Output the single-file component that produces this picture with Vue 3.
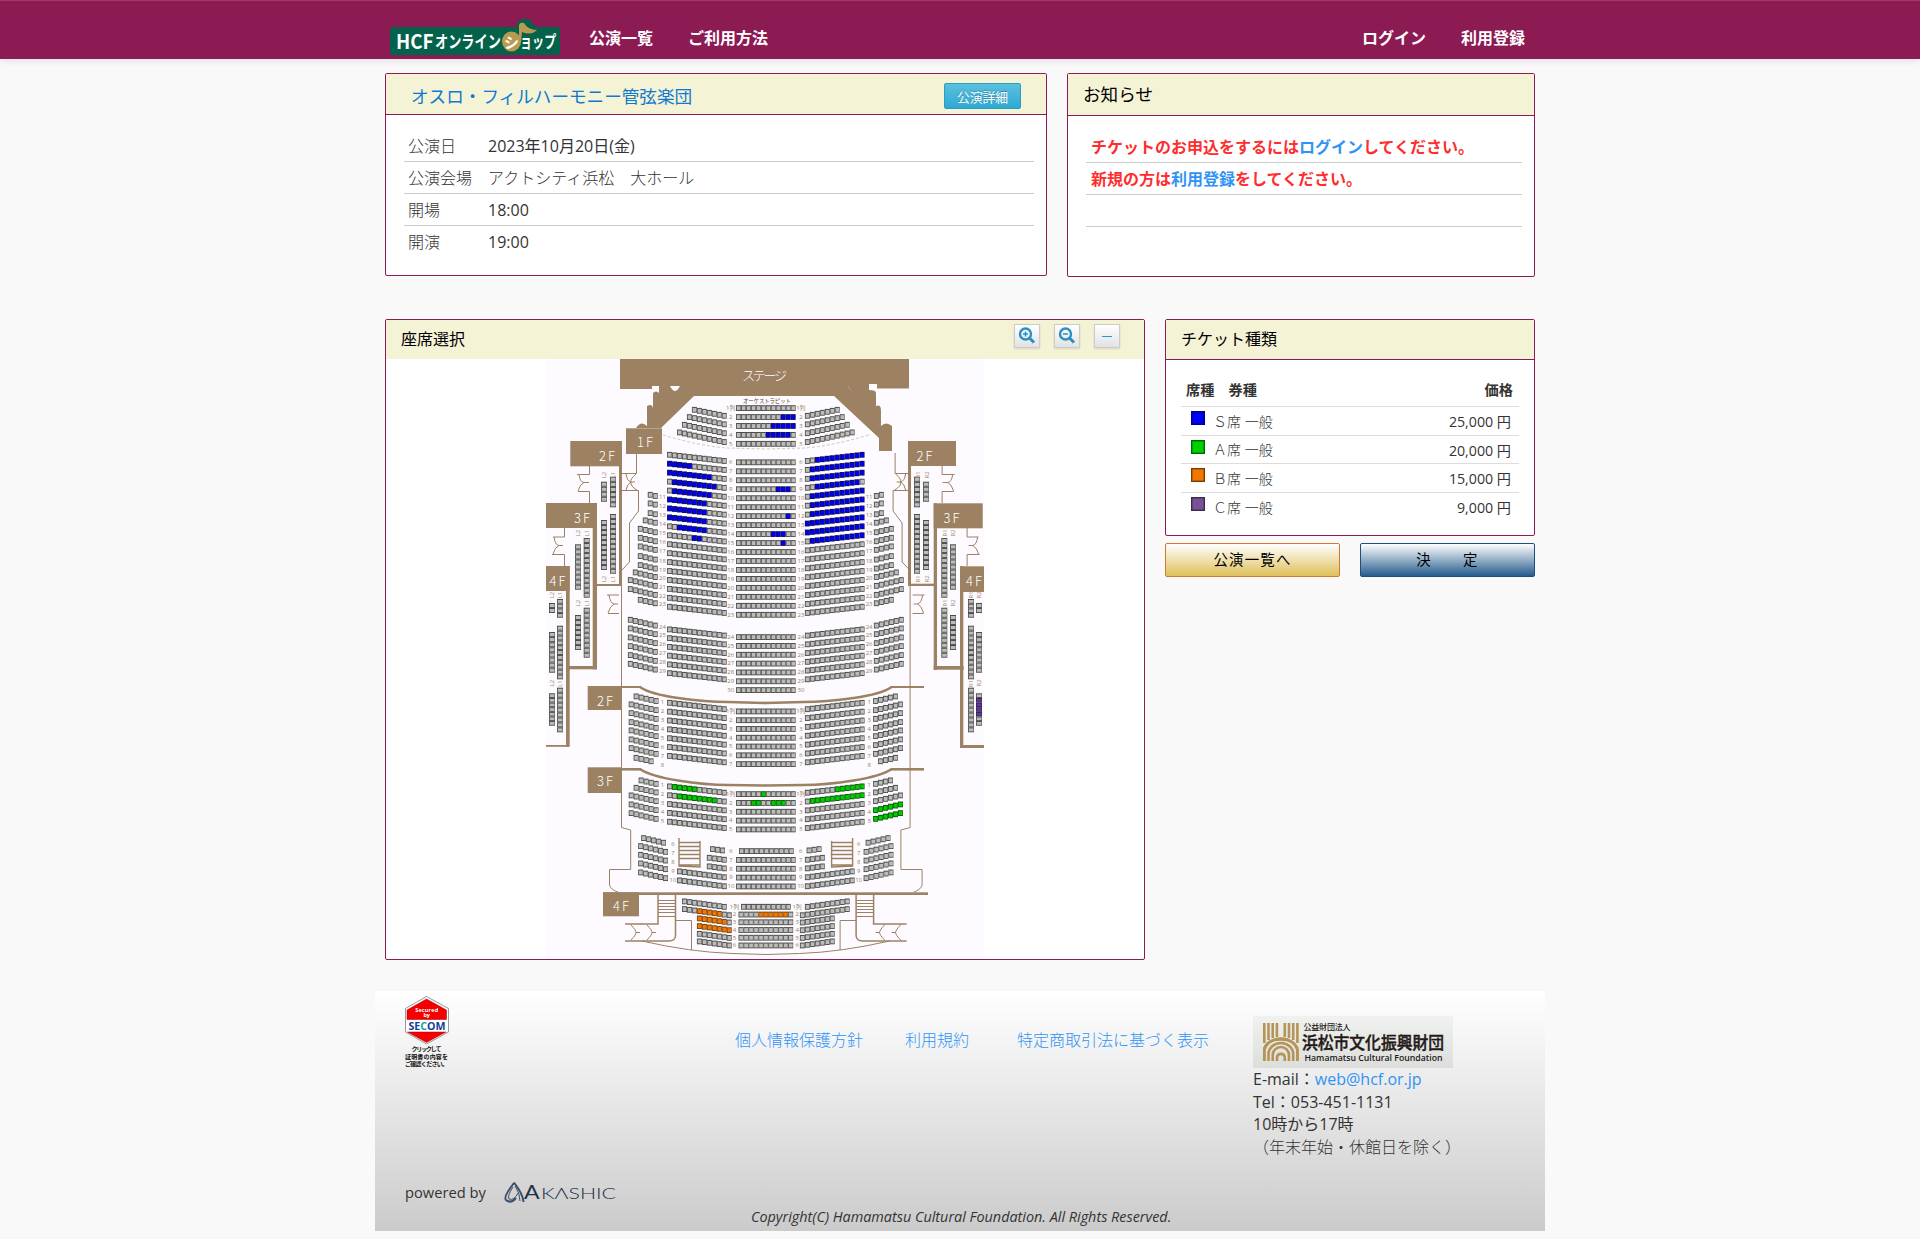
<template>
  <div class="page">
    <header class="navbar">
      <div class="navbar-inner">
        <a class="brand">
          <svg width="170" height="37" viewBox="390 18 170 37">
            <rect x="390" y="27" width="170" height="28" rx="3" fill="#04624b" />
            <path d="M517 30 L517 23 Q519 19 524 19 L528 19 Q532 22 535 26 L540 28 L537 34 L517 34 Z" fill="#04624b" />
            <ellipse cx="511.500" cy="41.500" rx="9.500" ry="10" fill="#b99a51" />
            <path d="M519 42 V26 Q519 22 524 23 Q528 30 537 30 Q531 36 522 32 L521 42 Z" fill="#b99a51" />
            <g class="brand-text">
              <text transform="translate(396 48.500) scale(.94 1)" font-size="20">HCF</text>
              <text transform="translate(435 47.500) scale(.775 1)" font-size="17">オンライン</text>
              <text transform="translate(504 47.500)" font-size="15">シ</text>
              <text transform="translate(520 47.500) scale(.71 1)" font-size="17">ョップ</text>
            </g>
          </svg>
        </a>
        <nav class="nav">
          <a>公演一覧</a>
          <a>ご利用方法</a>
        </nav>
        <nav class="nav nav-right">
          <a>ログイン</a>
          <a>利用登録</a>
        </nav>
      </div>
    </header>

    <main class="container">
      <div class="row">
        <section class="card event">
          <div class="card-head event-head">
            <h2>オスロ・フィルハーモニー管弦楽団</h2>
            <button class="btn-info">公演詳細</button>
          </div>
          <dl class="event-list">
            <div v-for="item in eventInfo" :key="item.label" class="event-item">
              <dt>{{ item.label }}</dt>
              <dd>{{ item.value }}</dd>
            </div>
          </dl>
        </section>

        <section class="card news">
          <div class="card-head news-head">お知らせ</div>
          <ul class="news-list">
            <li>チケットのお申込をするには<a>ログイン</a>してください。</li>
            <li>新規の方は<a>利用登録</a>をしてください。</li>
            <li></li>
            <li></li>
          </ul>
        </section>
      </div>

      <div class="row row-seat">
        <section class="card seat">
          <div class="card-head seat-head">
            <span>座席選択</span>
            <div class="tools">
              <button v-for="tool in ['plus', 'minus']" :key="tool" class="tool">
                <svg width="18" height="18" viewBox="0 0 18 18" fill="none" stroke="#2a8fc4">
                  <circle cx="7.500" cy="7" r="5.500" stroke-width="2.400" />
                  <path d="M11.500 11 L16 15.500" stroke-width="3" />
                  <path d="M5 7 H10" stroke-width="1.500" />
                  <path v-if="tool === 'plus'" d="M7.500 4.500 V9.500" stroke-width="1.500" />
                </svg>
              </button>
              <button class="tool"><span class="bar"></span></button>
            </div>
          </div>
          <div class="map">
            <svg width="438" height="600" viewBox="546 359 438 600">
              <rect x="546" y="359" width="438" height="600" fill="#fdfbff" />

              <!-- ステージ -->
              <g fill="#9c8162">
                <path d="M620 359 H909 V388.500 H877 V384 H869 V387 H859 L857 391 Q852 395 848 386 H834 L834 396 H693 V386 H620 Z" />
                <path d="M620 359 H909 V388 H877 V384 H869 V386 H661 V384 H652 V389 H620 Z" />
                <path d="M659 386 H670 Q675 396 680 386 H848 Q852 396 859 387 H869 V390 Q876 390 876 393 V406 Q881 404 881 411 V426 Q886 421 892 426 V451 H879 V438 L834 396 H694 L661 428 H636 Q641 420 647 426 V406 Q652 403 653 408 V393 Q656 390 659 393 Z" />
              </g>

              <!-- 階の表示と壁 -->
              <g fill="#9c8162">
                <rect v-for="(w, i) in walls" :key="i" :x="w[0]" :y="w[1]" :width="w[2]" :height="w[3]" />
              </g>
              <g v-for="side in sides" :key="side" :transform="side" fill="none" stroke="#9c8162">
                <path d="M621.500 586 V827.500 L630.700 830 V869.500 H609.500 V885 Q611 890 618 892" stroke-width="1" />
                <path d="M636.500 453 V473.500 H622 M622 490.500 H638.500 V511 L629.500 523 V562 L622 570" stroke-width="1" />
                <path d="M640 687 Q650 694 678 698 T728 702 L766 703" stroke-width="2.600" />
                <path d="M640 769 Q650 776 678 780.500 T728 785 L766 785.500" stroke-width="2.600" />
                <path d="M663 435 Q700 446 727 448 L766 449" stroke="#d3c7ba" stroke-width="1" stroke-dasharray="3 2" />
                <path d="M679 838 V866 L700 867 V841 M679 842.500 H700 M679 846.500 H700 M679 850.500 H700 M679 854.500 H700 M679 858.500 H700 M679 865 H700" stroke-width="1.400" />
                <path d="M658 895 V924 H625 M675.500 895 V936 Q675 941 669 941 H625" stroke-width="1.500" />
                <path d="M658 900.500 H675 M658 903.500 H675 M658 906.500 H675 M658 909.500 H675 M658 912.500 H675 M658 916.500 H675" stroke-width="1" />
                <path d="M675.500 920.500 H691.500 V950" stroke-width="1" />
                <path d="M642 941 Q690 952 732 953.500 L766 954.500" stroke-width="1" />
                <path d="M631 925 Q636 930 636 932.500 H640 M636 932.500 Q636 935 631 940 M647 925 Q652 930 652 932.500 H656 M652 932.500 Q652 935 647 940" stroke-width="1" />
                <path v-for="(d, i) in doors" :key="i" :d="d" stroke-width="1" />
              </g>

              <!-- 座席 -->
              <g v-for="(s, i) in seats" :key="i">
                <rect :x="s.x" :y="s.y" :width="s.w" :height="s.h" :fill="s.edge" />
                <rect :x="s.x + 0.8" :y="s.y + 1" :width="s.w - 1.3" :height="s.h - 1.9" :fill="s.color" />
              </g>

              <g class="row-no">
                <text v-for="(n, i) in numbers" :key="i" :x="n.x" :y="n.y">{{ n.t }}</text>
              </g>
              <g class="row-no">
                <text v-for="(n, i) in columnNames" :key="i" :transform="`translate(${n[0]} ${n[1]}) rotate(-90)`">{{ n[2] }}</text>
              </g>
              <g class="floor">
                <text v-for="(f, i) in floors" :key="i" :x="f[1]" :y="f[2]">{{ f[0] }}</text>
                <text x="765.500" y="379.500" textLength="47">ステージ</text>
              </g>
              <text x="743" y="403" textLength="48" class="pit">オーケストラピット</text>
            </svg>
          </div>
        </section>

        <aside class="side">
          <section class="card ticket">
            <div class="card-head ticket-head">チケット種類</div>
            <div class="ticket-table">
              <div class="ticket-row ticket-title">
                <span>席種　券種</span>
                <span>価格</span>
              </div>
              <div v-for="t in tickets" :key="t.name" class="ticket-row">
                <i class="swatch" :style="{ background: t.color }"></i>
                <span class="ticket-name">{{ t.name }}席 一般</span>
                <span class="price">{{ t.price }} 円</span>
              </div>
            </div>
          </section>
          <div class="actions">
            <button class="btn btn-back">公演一覧へ</button>
            <button class="btn btn-ok">決　　定</button>
          </div>
        </aside>
      </div>

      <footer class="footer">
        <svg class="secom" width="46" height="74" viewBox="404 995 46 74">
          <path d="M426.500 996.500 L448.500 1008.500 V1032 L426.500 1044 L405.500 1032 V1008.500 Z" fill="#fff" stroke="#999" stroke-width="1" />
          <path d="M426.500 999 L446.500 1010 V1019.500 H407 V1010 Z M407.500 1032 H446 L426.500 1042.500 Z" fill="#f40000" stroke="#a00" stroke-width=".5" />
          <g text-anchor="middle" font-weight="700">
            <text x="426.700" y="1011.500" font-size="5.500" fill="#fff" textLength="23">Secured</text>
            <text x="426.700" y="1016.500" font-size="5.500" fill="#fff">by</text>
            <text x="427" y="1030" font-size="11" fill="#143c96" textLength="37" lengthAdjust="spacingAndGlyphs">SE<tspan fill="#13a294">C</tspan>OM</text>
            <g fill="#111" font-size="6">
              <text x="426.500" y="1051" textLength="30">クリックして</text>
              <text x="426.500" y="1058.500" textLength="43">証明書の内容を</text>
              <text x="426.500" y="1066" textLength="43">ご確認ください。</text>
            </g>
          </g>
        </svg>
        <div class="powered">
          <span>powered by</span>
          <svg width="112" height="22" viewBox="504 1181 112 22">
            <g fill="none" stroke="#3b5068">
              <path d="M514 1183 Q503 1197 506 1200 Q511 1204 516 1198" stroke-width="2" />
              <path d="M514 1182.500 Q523 1194 523.500 1202" stroke-width="2" />
              <path d="M513 1187 Q507 1196 509 1199 Q514 1201 518 1193 M515 1186 Q520 1193 520 1201" stroke-width="1" />
            </g>
            <g fill="#1c304a" font-family="Lato, sans-serif">
              <text transform="translate(524 1199) scale(1.15 1)" font-size="20">A</text>
              <text x="541" y="1199" font-size="16" font-weight="300" textLength="75" lengthAdjust="spacingAndGlyphs">KΛSHIC</text>
            </g>
          </svg>
        </div>
        <nav class="links">
          <a>個人情報保護方針</a>
          <a>利用規約</a>
          <a>特定商取引法に基づく表示</a>
        </nav>
        <p class="copyright">Copyright(C) Hamamatsu Cultural Foundation. All Rights Reserved.</p>
        <address class="contact">
          <svg width="200" height="52" viewBox="0 0 200 52">
            <defs>
              <linearGradient id="plate" x2="0" y2="1">
                <stop offset="0" stop-color="#f0f2f0" />
                <stop offset="1" stop-color="#dcdedc" />
              </linearGradient>
            </defs>
            <rect width="200" height="52" fill="url(#plate)" />
            <g fill="none" stroke="#b69456" stroke-width="2.600">
              <path d="M11.300 7 V27 M15.500 7 V24 M19.700 7 V22 M23.900 7 V21 M31.800 7 V21 M36 7 V22 M40.200 7 V24 M44.400 7 V27" />
              <path d="M11.300 45 V36 A16.500 13.500 0 0 1 44.400 36 V45 M15.500 45 V38 A12.300 11 0 0 1 40.200 38 V45 M19.700 45 V39 A8.100 8 0 0 1 36 39 V45 M24 45 V41 A4 4 0 0 1 31.800 41 V45" />
              <path d="M11.300 45 V32 Q15 23.500 27.800 23.500 T44.400 32 V45" />
            </g>
            <g fill="#231815" font-weight="500">
              <text x="50.500" y="14" font-size="8" textLength="47">公益財団法人</text>
              <text x="49" y="32.500" font-size="16.500" textLength="142" lengthAdjust="spacingAndGlyphs" stroke="#231815" stroke-width=".4">浜松市文化振興財団</text>
              <text x="51.500" y="44.500" font-size="8.500" font-weight="600" textLength="138" lengthAdjust="spacingAndGlyphs">Hamamatsu Cultural Foundation</text>
            </g>
          </svg>
          <div>E-mail：<a>web@hcf.or.jp</a></div>
          <div>Tel：053-451-1131</div>
          <div>10時から17時</div>
          <div>（年末年始・休館日を除く）</div>
        </address>
      </footer>
    </main>
  </div>
</template>

<script setup>
const eventInfo = [
  { label: '公演日', value: '2023年10月20日(金)' },
  { label: '公演会場', value: 'アクトシティ浜松　大ホール' },
  { label: '開場', value: '18:00' },
  { label: '開演', value: '19:00' }
]

const tickets = [
  { name: 'Ｓ', color: '#0000ff', price: '25,000' },
  { name: 'Ａ', color: '#00d000', price: '20,000' },
  { name: 'Ｂ', color: '#f07800', price: '15,000' },
  { name: 'Ｃ', color: '#785096', price: '9,000' }
]

const BLUE = '#0000f8'
const GREEN = '#00cc00'
const ORANGE = '#f07800'
const PURPLE = '#5c3c98'

const edges = {
  [BLUE]: '#10105c',
  [GREEN]: '#0a5a0a',
  [ORANGE]: '#7a4410',
  [PURPLE]: '#33244c'
}

const AXIS = 1531.6
const PITCH = 4.97
const seats = []
const numbers = []

const addSeat = (x, y, w, h, color) => {
  seats.push({
    x, y, w, h,
    color: color || '#bcbcb8',
    edge: edges[color] || '#4c4c4c'
  })
}

// 横一列。on は販売中の席 [開始, 終了, 色]
const addRow = (x, y, count, drop, on = []) => {
  for (let i = 0; i < count; i++) {
    const hit = on.find(o => i >= o[0] && i <= o[1])
    addSeat(x + i * PITCH, y + i * drop - 2.8, PITCH, 5.8, hit && hit[2])
  }
}

// 左右対称の列。end は左側ブロックの右端
const addPair = (end, y, count, drop, left, right) => {
  addRow(end - count * PITCH, y, count, drop, left)
  addRow(AXIS - end, y + (count - 1) * drop, count, -drop, right)
}

const addNumber = (t, x, y) => {
  numbers.push({ t, x, y: y + 2 })
  numbers.push({ t, x: AXIS - x, y: y + 2 })
}

// 1F 中央
const centerOn = {
  2: [9, 11], 3: [7, 11], 4: [6, 10], 9: [8, 10], 12: [10, 10], 14: [7, 9], 15: [9, 9]
}
for (let n = 1; n <= 30; n++) {
  let y = 408 + (n - 1) * 8.93
  if (n > 5) y = 462.2 + (n - 6) * 8.97
  if (n > 23) y = 637 + (n - 24) * 8.83
  const on = centerOn[n] ? [[...centerOn[n], BLUE]] : []
  addRow(736, y, 12, 0, on)
  addNumber(n === 1 ? '1列' : n, 730.7, y)
}

// 1F 前方
addPair(726.7, 409.7, 7, 1, [], [])
addPair(726.7, 417, 8, 1.03, [], [])
addPair(726.7, 424.7, 9, 1.05, [], [])
addPair(726.7, 432.3, 10, 1.07, [], [])

// 1F 左右
const leftOn = {
  7: [0, 4], 8: [0, 8], 9: [1, 9], 10: [1, 8], 11: [0, 7], 12: [0, 7], 13: [0, 7], 14: [2, 7], 15: [5, 6]
}
const rightOn = {
  6: [2, 11], 7: [1, 11], 8: [1, 11], 9: [2, 10], 10: [1, 11], 11: [1, 11], 12: [1, 11], 13: [0, 11], 14: [0, 11], 15: [1, 11]
}
for (let n = 6; n <= 29; n++) {
  const y = n < 24 ? 454.7 + (n - 6) * 8.94 : 629.3 + (n - 24) * 8.75
  const l = leftOn[n] ? [[...leftOn[n], BLUE]] : []
  const r = rightOn[n] ? [[...rightOn[n], BLUE]] : []
  addPair(726.7, y, 12, 0.56, l, r)
}

// 1F 両端 [y, 席数]
const outer = [
  [494.7, 2], [503.3, 2], [513, 2], [520.3, 3], [528.7, 4], [537.7, 4], [546.3, 4], [556, 4], [565, 4],
  [572.3, 5], [580, 6], [589, 6], [599.7, 4], [619.7, 6], [628.3, 6], [637.3, 6], [646, 6], [655, 6], [663.7, 6]
]
outer.forEach(([y, count], i) => {
  addPair(657.7, y, count, 1.15, [], [])
  addNumber(i + 11, 662.5, y + count * 1.15)
})

// 2F
for (let i = 0; i < 7; i++) {
  addRow(736, 711.3 + i * 8.78, 12, 0)
  addPair(726.7, 702.7 + i * 8.85, 12, 0.58, [], [])
  addNumber(i ? i + 1 : '1列', 730.7, 711 + i * 8.85)
}
const outer2 = [[696.3, 5], [704.3, 6], [713, 6], [722, 6], [730.3, 6], [739.3, 6], [748, 6]]
outer2.forEach(([y, count], i) => {
  addPair(658.5, y, count, 1.15, [], [])
  addNumber(i + 1, 662.5, 701.5 + i * 9)
})
addPair(653.5, 757.7, 4, 1.15, [], [])
addNumber(8, 662.5, 764.5)

// 3F 前方
const green = {
  center: [[[5, 5, GREEN]], [[3, 4, GREEN], [7, 9, GREEN]]],
  left: [[[1, 5, GREEN]], [[2, 9, GREEN]]],
  right: [[[6, 11, GREEN]], [[1, 11, GREEN]]]
}
const outer3 = [[780.3, 4], [787.7, 5], [795.3, 6], [804.3, 6], [813, 6]]
outer3.forEach(([y, count], i) => {
  addRow(736, 794 + i * 8.83, 12, 0, green.center[i])
  addPair(726.7, 786.3 + i * 8.83, 12, 0.57, green.left[i], green.right[i])
  addPair(658.5, y, count, 1.15, [], i > 2 ? [[0, 5, GREEN]] : [])
  addNumber(i ? i + 1 : '1列', 730.7, 794 + i * 8.83)
  addNumber(i + 1, 662.5, 785 + i * 9)
})

// 3F 後方 [左 y, 席数]
const back = [[849, 3], [857.7, 4], [866.3, 4], [871.3, 10], [880.3, 10]]
back.forEach(([y, count], i) => {
  addRow(i ? 736 : 739, 851 + i * 8.83, i ? 12 : 11, 0)
  addPair(i ? 726.7 : 725, y, count, 0.65, [], [])
  addPair(i ? 668 : 666, [838, 846, 854.7, 863.3, 872.3][i], i ? 6 : 5, 1.15, [], [])
  addNumber(i + 6, 731, 851 + i * 8.83)
  addNumber(i + 6, 673, 844 + i * 9)
})

// 4F
const top = [[726.7, 901.3, 9], [731.7, 909, 10], [731.7, 918.3, 7], [731.7, 926, 7], [731.7, 933.7, 7], [731.7, 941.3, 7]]
const orange = [[], [[3, 7, ORANGE]], [[0, 5, ORANGE]], [[0, 6, ORANGE]], [], []]
top.forEach(([end, y, count], i) => {
  addRow(i ? 738.5 : 741, 906.7 + i * 7.73, i ? 11 : 10, 0, i === 1 ? [[4, 9, ORANGE]] : [])
  addPair(end, y, count, 0.68, orange[i], [])
  addNumber(i ? i + 1 : '1列', 734.5, 906.7 + i * 7.73)
})

// バルコニー席 [x, 上端, 下端, 席数]
const balconies = [
  [604, 481.7, 501.7, 4], [613, 476.7, 507.3, 6], [604, 520, 570, 10], [613, 514, 573.7, 12],
  [578, 544.3, 589.7, 9], [586.7, 538, 597.7, 12], [578, 615, 650, 7], [586.7, 607.7, 657.7, 10],
  [552, 603, 613, 2], [560, 599, 617.7, 4], [552, 632, 672.7, 8], [560, 625.7, 679.3, 11],
  [552, 693.3, 725.7, 7], [560, 687.7, 732.3, 9]
]
balconies.forEach(([x, y1, y2, count], k) => {
  const h = (y2 - y1) / count
  for (let i = 0; i < count; i++) {
    addSeat(x - 3, y1 + i * h, 6, h)
    const right = k < 4 ? 1530 - x : 1531 - x
    addSeat(right - 3, y1 + i * h, 6, h, k === 12 && i > 0 && i < 5 ? PURPLE : null)
  }
})

const columnNames = []
const nameSpots = [
  [606, 475, 2], [615, 475, 1], [606, 579, 2], [615, 579, 1], [580, 533, 2], [588.5, 533, 1],
  [580, 603, 2], [588.5, 603, 1], [554, 595, 2], [562, 595, 1], [554, 683, 2], [562, 683.5, 1]
]
nameSpots.forEach(([x, y, n]) => {
  columnNames.push([x, y, 'L' + n])
  columnNames.push([1535 - x, y, 'R' + n])
})

const walls = [
  [626, 428.3, 36, 25.7],
  [570.3, 441, 51.7, 25.3], [619, 441, 3, 145], [597, 584, 25, 2],
  [546, 503, 51, 25], [592.7, 503, 4.3, 166.3], [569, 666, 28, 3.3],
  [546, 566, 23.7, 25], [566, 566, 3.7, 180.7], [546, 745, 23, 1.8],
  [908, 441, 48, 25], [908, 441, 3, 145], [908, 583.7, 29, 2.3],
  [933.7, 503.3, 49, 25], [933.7, 503.3, 3.3, 166.7], [933.7, 666, 30, 3.7],
  [960, 566.3, 24, 25.7], [960, 566.3, 3.3, 181.7], [960, 745, 24, 3],
  [587.7, 686, 34, 24], [587.7, 767.3, 34, 25.7], [603, 892.3, 36, 24],
  [603, 892.3, 325, 2.7],
  [620, 686, 21, 2], [891, 686, 33, 2], [620, 768, 21, 2.6], [891, 768, 33, 2.6]
]

const sides = ['', `translate(${AXIS}) scale(-1 1)`]

const doors = [
  'M589.500 466 V474.500 H577 M579 475 Q580 482 584 482.500 H589 M584 482.500 Q580 484 578 491 M578 491.500 H589.500 V503',
  'M564.500 528 V537 H553 M554 537 Q555 545 559 545.500 H563 M559 545.500 Q555 547 553 554 M552 554.500 H564.500 V566',
  'M626 474 Q627 481 631 482 H635 M631 482 Q627 484 626 490 M636 474 Q630 479 631 482 Q630 486 637 490',
  'M607 595 H619 M609 595 Q610 603 614 604 H618 M614 604 Q610 606 608 613 M608 613.500 H619'
]

const floors = [
  ['1F', 646, 446.500], ['2F', 608, 461], ['3F', 583, 522.500], ['4F', 558.500, 586],
  ['2F', 925.500, 461], ['3F', 952.500, 522.500], ['4F', 975, 586],
  ['2F', 606, 705.500], ['3F', 606, 786], ['4F', 622, 911]
]
</script>

<style>
body {
  margin: 0;
  background: #f9f9f9;
}
</style>

<style scoped>
.page {
  font-family: "Open Sans", "Noto Sans CJK JP", sans-serif;
  font-size: 16px;
  color: #333;
  min-height: 1239px;
  overflow: hidden;
}

.page * {
  box-sizing: border-box;
}

a {
  color: #2f93f5;
}

button {
  font-family: inherit;
  padding: 0;
}

.navbar {
  height: 59px;
  background: #8c1a53;
  border-top: 1px solid #9f3a6b;
  box-shadow: 0 1px 8px rgba(0, 0, 0, 0.12);
}

.navbar-inner {
  width: 1140px;
  margin: 0 auto;
  padding: 17px 5px 0 0;
  display: flex;
}

.brand {
  height: 37px;
  margin: 0 29px 0 0;
}

.brand svg,
.powered svg,
.secom {
  display: block;
  overflow: visible;
}

.brand-text {
  fill: #fff;
  font-weight: 700;
  font-family: "Noto Sans CJK JP", sans-serif;
}

.nav {
  display: flex;
  gap: 35px;
  line-height: 40px;
}

.nav a {
  color: #fff;
  font-weight: 600;
}

.nav-right {
  margin-left: auto;
}

.container {
  width: 1170px;
  margin: 0 auto;
}

.row {
  display: flex;
  align-items: flex-start;
  gap: 20px;
  padding: 14px 10px 0;
}

.row-seat {
  padding-top: 42px;
}

.card {
  background: #fff;
  border: 1px solid #8c1a53;
  border-radius: 2px;
}

.card-head {
  background: #f5f3d5;
  color: #000;
  display: flex;
  align-items: center;
}

.event {
  width: 662px;
  height: 203px;
}

.event-head {
  height: 41px;
  padding: 4px 25px 0 25px;
  border-bottom: 1px solid #8c1a53;
  justify-content: space-between;
}

.event-head h2 {
  margin: 0 0 1px;
  font-size: 17.6px;
  font-weight: 400;
  color: #0d7ad0;
}

.btn-info {
  width: 77px;
  height: 26px;
  border: 1px solid #2a9dc4;
  border-radius: 2px;
  background: linear-gradient(#5bc0de, #2fa9d3);
  color: #fff;
  font-size: 12.8px;
  text-shadow: 0 -1px 0 rgba(0, 0, 0, 0.25);
}

.event-list {
  margin: 15px 12px 0 18px;
}

.event-item {
  height: 32px;
  line-height: 32px;
  padding-left: 4px;
  display: flex;
  border-bottom: 1px solid #ccc;
}

.event-item:last-child {
  border-bottom: none;
}

.event-item dt {
  width: 80px;
  font-weight: 300;
}

.event-item dd {
  margin: 0;
}

.event-item:nth-child(2) dd {
  font-weight: 300;
}

.news {
  width: 468px;
  height: 204px;
}

.news-head {
  height: 42px;
  padding: 0 0 2px 15px;
  font-size: 17.6px;
  border-bottom: 1px solid #8c1a53;
}

.news-list {
  list-style: none;
  margin: 15px 12px 0 18px;
  padding: 0;
  color: #ff2d2d;
  font-weight: 600;
}

.news-list li {
  height: 32px;
  line-height: 32px;
  padding-left: 5px;
  border-bottom: 1px solid #ccc;
}

.news-list li:last-child {
  border-bottom: none;
}

.seat {
  width: 760px;
  height: 641px;
  overflow: hidden;
}

.seat-head {
  height: 39px;
  padding: 0 24px 0 15px;
  justify-content: space-between;
}

.seat-head > span {
  margin-bottom: 3px;
}

.tools {
  display: flex;
  gap: 14px;
  padding-bottom: 7px;
}

.tool {
  width: 26px;
  height: 24px;
  border: 1px solid #ccc;
  background: linear-gradient(#fff, #e2e2e2);
  box-shadow: 0 1px 2px rgba(0, 0, 0, 0.12);
  display: flex;
  align-items: center;
  justify-content: center;
}

.bar {
  width: 10px;
  height: 1px;
  background: #1c9be0;
}

.map {
  display: flex;
  padding-left: 160px;
}

.row-no {
  font-size: 6px;
  fill: #9c8162;
  text-anchor: middle;
}

.floor {
  font-family: "Noto Sans CJK JP", sans-serif;
  font-size: 13px;
  font-weight: 300;
  letter-spacing: 2px;
  fill: #fff;
  text-anchor: middle;
}

.pit {
  font-size: 5.5px;
  fill: #5a3c28;
}

.side {
  width: 370px;
}

.ticket {
  height: 217px;
}

.ticket-head {
  height: 40px;
  padding: 0 0 3px 15px;
  border-bottom: 1px solid #8c1a53;
}

.ticket-table {
  margin: 17px 15px 0;
  font-size: 14px;
}

.ticket-row {
  height: 28.6px;
  display: flex;
  align-items: center;
  padding: 0 8px 0 10px;
  border-top: 1px solid #ddd;
}

.ticket-title {
  height: 29px;
  padding: 0 6px 5px 5px;
  border-top: none;
  justify-content: space-between;
  font-weight: 600;
  font-size: 14.2px;
}

.swatch {
  width: 14px;
  height: 14px;
  margin: 0 8px 5px 0;
  border: 1px solid rgba(0, 0, 0, 0.5);
  box-shadow: inset 0 0 0 0.5px rgba(0, 0, 0, 0.4);
}

.ticket-name {
  font-weight: 300;
}

.price {
  margin-left: auto;
  padding-top: 1px;
  font-size: 14.2px;
}

.actions {
  display: flex;
  gap: 20px;
  margin-top: 7px;
}

.btn {
  flex: 1;
  height: 34px;
  padding-bottom: 3px;
  border-radius: 2px;
  font-size: 14.4px;
  letter-spacing: 1.2px;
  font-weight: 400;
  color: #000;
}

.btn-back {
  border: 1px solid #d1792f;
  background: linear-gradient(#fff, #dfc05a);
}

.btn-ok {
  border: 1px solid #1d4f7c;
  background: linear-gradient(#fff, #255c8d);
}

.footer {
  height: 240px;
  margin-top: 31px;
  padding: 4px 29px 0;
  background: linear-gradient(#fff, #cbcbcb);
  display: grid;
  grid-template-columns: 330px 1fr 263px;
  grid-template-rows: 172px 64px;
}

.links {
  grid-column: 2;
  grid-row: 1;
  display: flex;
  padding: 32px 0 0 1px;
  white-space: nowrap;
  font-weight: 300;
}

.links a:nth-child(2) {
  margin: 0 48px 0 42px;
}

.contact {
  grid-column: 3;
  grid-row: 1;
  padding-top: 21px;
  font-style: normal;
  line-height: 22.7px;
  white-space: nowrap;
}

.contact svg {
  display: block;
}

.contact div:last-child {
  font-weight: 300;
}

.powered {
  grid-column: 1;
  grid-row: 2;
  display: flex;
  gap: 18px;
  align-items: flex-start;
  padding: 14px 0 0 1px;
  line-height: 22px;
}

.powered span {
  width: 81px;
  font-size: 14.7px;
}

.copyright {
  grid-column: 2;
  grid-row: 2;
  margin: 40px -40px 0 17px;
  font-size: 14.4px;
  line-height: 20px;
  font-style: italic;
  white-space: nowrap;
}
</style>
